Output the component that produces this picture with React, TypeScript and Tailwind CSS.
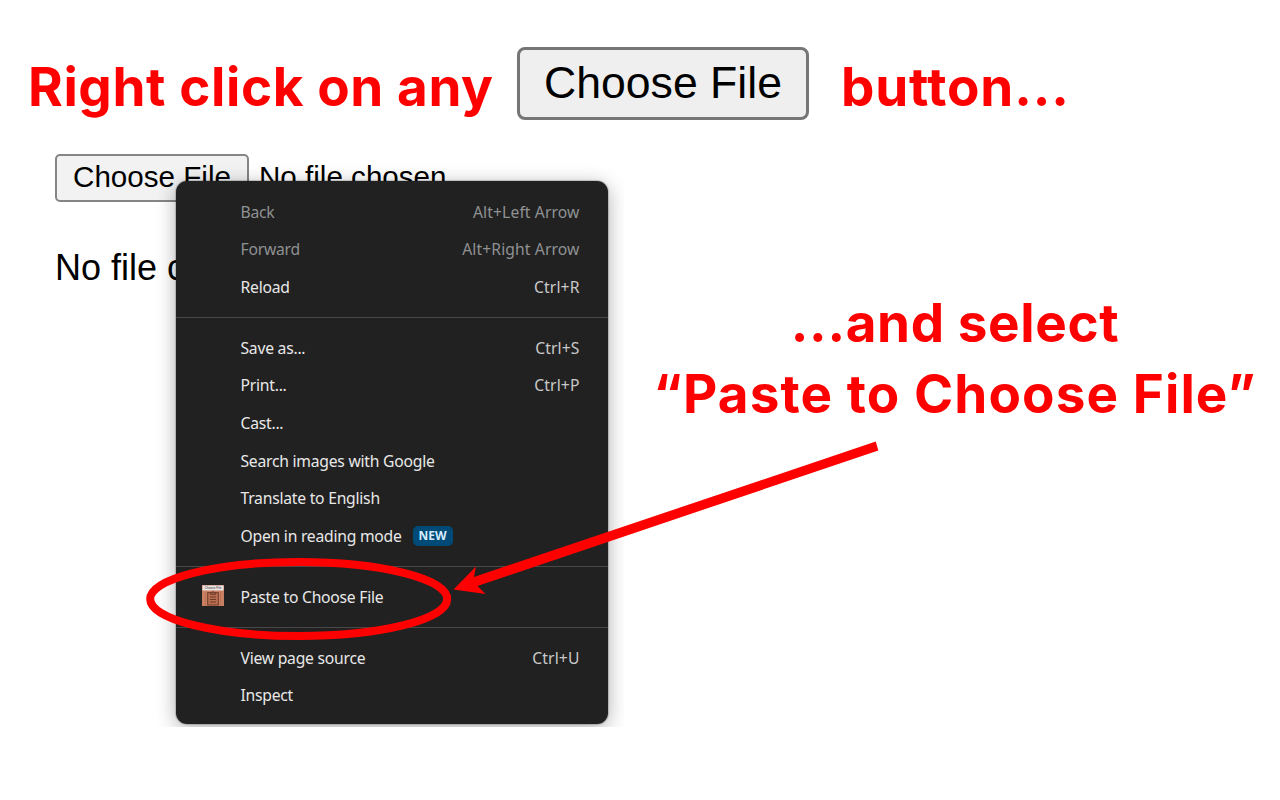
import React from "react";

type Item = { label: string; keys?: string; disabled?: boolean; isNew?: boolean; icon?: boolean };

const groups: Item[][] = [
  [
    { label: "Back", keys: "Alt+Left Arrow", disabled: true },
    { label: "Forward", keys: "Alt+Right Arrow", disabled: true },
    { label: "Reload", keys: "Ctrl+R" },
  ],
  [
    { label: "Save as...", keys: "Ctrl+S" },
    { label: "Print...", keys: "Ctrl+P" },
    { label: "Cast..." },
    { label: "Search images with Google" },
    { label: "Translate to English" },
    { label: "Open in reading mode", isNew: true },
  ],
  [{ label: "Paste to Choose File", icon: true }],
  [{ label: "View page source", keys: "Ctrl+U" }, { label: "Inspect" }],
];

function ClipboardIcon() {
  return (
    <svg viewBox="0 0 22 21" className="-mt-[4px] h-[21px] w-[22px]">
      <rect width="22" height="21" fill="#c97f62" />
      <rect x="0.5" y="0.5" width="21" height="5" fill="#ece6e6" />
      <text x="11" y="4.2" fontSize="3.2" textAnchor="middle" fill="#333" fontFamily="Liberation Sans, sans-serif">
        Choose File
      </text>
      <rect x="5.7" y="7.7" width="10.6" height="12.3" fill="#b96f50" stroke="#6d3b2b" />
      <path d="M8.5 7V9.3H13.5V7M11 5.8V8M8 12H14M8 14.5H14M8 17H14" fill="none" stroke="#6d3b2b" />
      <path d="M3.5 7V21M18.5 7V21" stroke="#b56a4d" strokeWidth="0.6" />
    </svg>
  );
}

function Row({ item }: { item: Item }) {
  return (
    <li
      className={`flex h-[37.7px] items-center pr-[28.5px] pt-[1.2px] text-[15.7px] ${item.disabled ? "text-[#8f9193]" : "text-[#e8e8e8]"}`}
    >
      <span className="flex w-[64.5px] shrink-0 pl-[26px]">{item.icon && <ClipboardIcon />}</span>
      <span className="whitespace-nowrap tracking-[-0.24px]">{item.label}</span>
      {item.isNew && (
        <span className="-mt-px ml-[11px] flex h-5 w-10 items-center justify-center rounded-[5px] bg-[#004a77] text-[12px] font-bold text-[#d3ecff]">
          NEW
        </span>
      )}
      {item.keys && (
        <span className={`ml-auto whitespace-nowrap tracking-[0.1px] ${item.disabled ? "" : "text-[#c9c9c9]"}`}>{item.keys}</span>
      )}
    </li>
  );
}

export default function App() {
  return (
    <div className="relative h-[800px] w-[1280px] overflow-hidden bg-white text-black">
      <header className="flex h-[120px] items-start pl-[28px] pt-[47px] font-['Inter',sans-serif] text-[53px] font-bold leading-[80px] text-[#ff0000]">
        <span className="w-[489px] shrink-0 whitespace-nowrap tracking-[0.6px]">Right click on any</span>
        <span className="flex h-[73px] w-[292px] shrink-0 items-center justify-center rounded-[8px] border-[3px] border-[#767676] bg-[#efefef] font-['Liberation_Sans',sans-serif] text-[44.6px] font-normal text-black">
          <span className="-mt-0.5 whitespace-nowrap">Choose File</span>
        </span>
        <span className="ml-[32px] whitespace-nowrap tracking-[0.8px]">button...</span>
      </header>

      <main className="flex">
        <section className="w-[624px] shrink-0 pl-[55px] pt-[34px] font-['Liberation_Sans',sans-serif]">
          <div className="flex items-start text-[29.6px] leading-[46px]">
            <span className="flex h-[48px] w-[194px] items-center justify-center whitespace-nowrap rounded-[5px] border-2 border-[#858585] bg-[#f2f2f2] pb-[2px]">
              Choose File
            </span>
            <span className="ml-[10px] whitespace-nowrap">No file chosen</span>
          </div>
          <p className="mt-[42px] text-[36px] leading-[48px]">No file c</p>
        </section>
        <section className="flex w-[662px] shrink-0 flex-col items-center pt-[168px] font-['Inter',sans-serif] text-[53px] font-bold leading-[71px] text-[#ff0000]">
          <p className="whitespace-nowrap tracking-[0.6px]">...and select</p>
          <p className="whitespace-nowrap tracking-[1.1px]">“Paste to Choose File”</p>
        </section>
      </main>

      <div className="pointer-events-none absolute left-0 top-0 h-[727px] w-[624px] overflow-hidden">
        <nav className="absolute left-[176px] top-[181px] h-[543px] w-[432px] overflow-visible rounded-[11px] bg-[#212121] pt-[12px] font-['Noto_Sans',sans-serif] shadow-[0_4px_20px_rgba(0,0,0,0.32),0_0_1px_1px_rgba(0,0,0,0.18)]">
          {groups.map((group, i) => (
            <ul key={i} className={i ? "mt-[11px] border-t border-[#484848] pt-[11px]" : ""}>
              {group.map((item) => (
                <Row key={item.label} item={item} />
              ))}
            </ul>
          ))}
        </nav>
      </div>

      <svg className="pointer-events-none absolute left-0 top-0 h-[800px] w-[1280px]" viewBox="0 0 1280 800">
        <ellipse cx="298.7" cy="599" rx="148.5" ry="37" fill="none" stroke="#ff0000" strokeWidth="8" />
        <path d="M875.8 441.5L878.3 450.5L477.5 586L485.5 594L453.5 589.5L476 566.5L474 577Z" fill="#ff0000" />
      </svg>
    </div>
  );
}
